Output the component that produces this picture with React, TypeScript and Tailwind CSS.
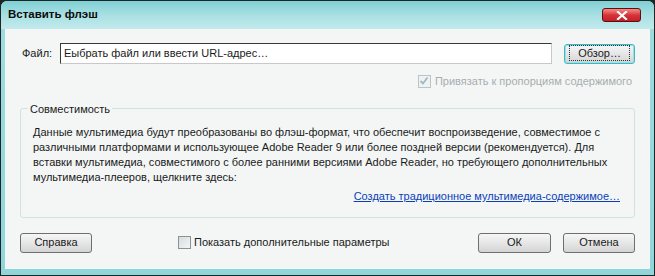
import React from 'react';

const font = { fontFamily: '"Liberation Sans", Arial, sans-serif' };

function Btn({ children, focused = false, className = '' }: { children: React.ReactNode; focused?: boolean; className?: string }) {
  return (
    <button
      className={`h-[20px] rounded-[3px] border text-[11px] text-[#1a1a1a] bg-gradient-to-b from-[#f6f6f6] via-[#e6e6e6] to-[#d4d4d4] ${
        focused ? 'border-[#3fb8c0] shadow-[inset_0_0_0_1px_#9be0e4]' : 'border-[#6f6f6f]'
      } ${className}`}
    >
      <span className={focused ? 'px-[8px] py-[1px] border border-dotted border-[#333]' : ''}>{children}</span>
    </button>
  );
}

export default function App() {
  return (
    <div className="w-[655px] h-[276px] bg-[#1c2626] p-[1px]" style={font}>
      <div className="flex h-full flex-col rounded-t-[6px] bg-gradient-to-b from-[#9fdce0] to-[#8fd6da]">
        {/* Title bar */}
        <div className="flex h-[28px] items-center justify-between rounded-t-[6px] bg-gradient-to-b from-[#7fcfd4] via-[#a8e0e3] to-[#c2eaec] pl-[7px] pr-[13px]">
          <span className="text-[11.5px] font-bold text-[#0c0c0c]">Вставить флэш</span>
          <div className="flex h-[14px] w-[39px] items-center justify-center rounded-[3px] border border-[#5a1010] bg-gradient-to-b from-[#f08a8a] via-[#d8323a] to-[#c4202a]">
            <svg width="12" height="9" viewBox="0 0 12 9">
              <path d="M2 1 L10 8 M10 1 L2 8" stroke="#fff" strokeWidth="2.2" strokeLinecap="square" />
            </svg>
          </div>
        </div>

        {/* Client */}
        <div className="mx-[4px] mb-[6px] flex flex-1 flex-col bg-[#f3f6f5] px-[15px] pt-[14px] text-[11px] text-[#1a1a1a]">
          <div className="flex items-center">
            <span className="w-[40px] pl-[2px]">Файл:</span>
            <div className="flex h-[21px] w-[493px] items-center border border-[#3a3a3a] border-b-[#c8c8c8] border-r-[#c8c8c8] bg-white pl-[3px]">
              Еыбрать файл или ввести URL-адрес…
            </div>
            <Btn focused className="ml-[12px] w-[71px]">Обзор…</Btn>
          </div>

          <div className="mt-[9px] flex items-center justify-end pr-[3px] text-[#a7aeae]">
            <span className="mr-[4px] flex h-[13px] w-[13px] items-center justify-center border border-[#bcc4c4] bg-[#eef2f2]">
              <svg width="10" height="10" viewBox="0 0 10 10">
                <path d="M1.5 5 L4 7.5 L8.5 1.5" stroke="#9fb8c0" strokeWidth="1.8" fill="none" />
              </svg>
            </span>
            Привязать к пропорциям содержимого
          </div>

          <fieldset className="mt-[11px] h-[117px] rounded-[3px] border border-[#cfe3e3] pl-[12px] pr-[10px]">
            <legend className="ml-[-5px] px-[2px]">Совместимость</legend>
            <p className="mt-[8px] leading-[15px] whitespace-nowrap">
              Данные мультимедиа будут преобразованы во флэш-формат, что обеспечит воспроизведение, совместимое с<br />
              различными платформами и использующее Adobe Reader 9 или более поздней версии (рекомендуется). Для<br />
              вставки мультимедиа, совместимого с более ранними версиями Adobe Reader, но требующего дополнительных<br />
              мультимедиа-плееров, щелкните здесь:
            </p>
            <div className="mt-[3px] flex justify-end pr-[4px]">
              <span className="text-[#0b3fb8] underline">Создать традиционное мультимедиа-содержимое…</span>
            </div>
          </fieldset>

          <div className="mt-[15px] flex items-center">
            <Btn className="w-[72px]">Справка</Btn>
            <span className="ml-[86px] mr-[3px] h-[13px] w-[13px] border border-[#8a9494] bg-gradient-to-br from-[#d6dcdc] to-[#f4f6f6]" />
            <span>Показать дополнительные параметры</span>
            <Btn className="ml-auto w-[73px]">ОК</Btn>
            <Btn className="ml-[12px] w-[72px]">Отмена</Btn>
          </div>
        </div>
      </div>
    </div>
  );
}
